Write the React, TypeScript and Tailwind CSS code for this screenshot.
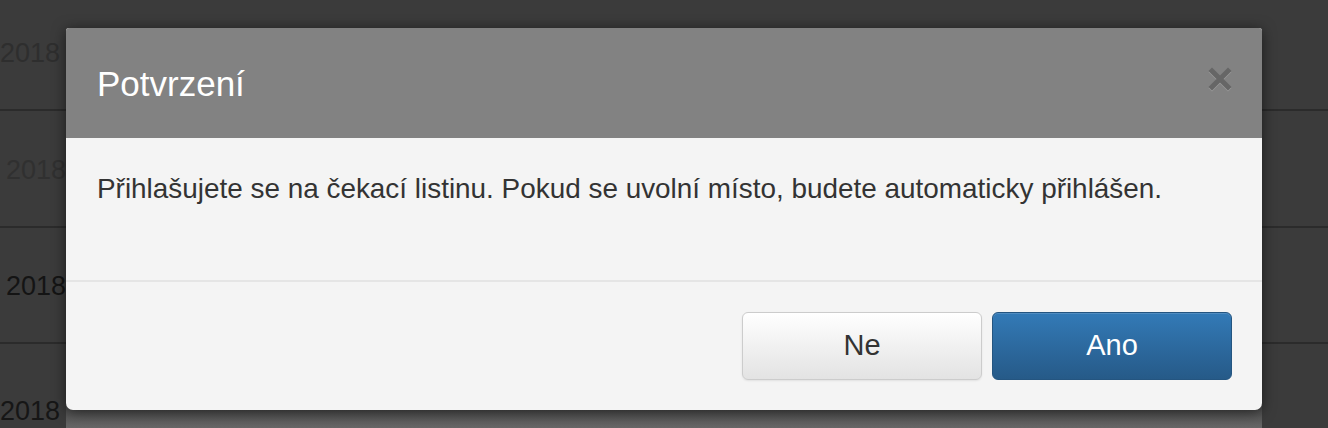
import React from 'react';

const rows = [
  { h: 'h-[111px]', pad: 'pt-[38px] pl-0', color: 'text-[#2e2e2e]' },
  { h: 'h-[117px]', pad: 'pt-[44px] pl-[6px]', color: 'text-[#303030]' },
  { h: 'h-[116px]', pad: 'pt-[43px] pl-[6px]', color: 'text-[#141414]' },
];

function CloseIcon() {
  return (
    <svg width="26" height="26" viewBox="0 0 26 26">
      <g strokeWidth="5" strokeLinecap="square">
        <path d="M5 6 L21 22 M21 6 L5 22" stroke="#9a9a9a" />
        <path d="M5 5 L21 21 M21 5 L5 21" stroke="#666666" />
      </g>
    </svg>
  );
}

export default function App() {
  return (
    <div
      className="relative h-[428px] w-[1328px] overflow-hidden bg-[#3b3b3b]"
      style={{ fontFamily: '"Liberation Sans", Arial, sans-serif' }}
    >
      {/* page behind the backdrop */}
      {rows.map((r, i) => (
        <div key={i} className={`${r.h} border-b-2 border-[#2b2b2b] ${r.pad}`}>
          <span className={`text-[27px] leading-[30px] ${r.color}`}>2018</span>
        </div>
      ))}
      <div className="flex h-[84px]">
        <div className="w-[66px] pt-[52px]">
          <span className="text-[27px] leading-[30px] text-[#161616]">2018</span>
        </div>
        <div className="w-[1196px] bg-gradient-to-b from-[#3b3b3b] via-[#3b3b3b] via-60% to-[#676767]" />
      </div>

      {/* modal */}
      <div className="absolute left-[66px] top-[28px] w-[1196px] overflow-hidden rounded-b-[7px] rounded-t-[3px] bg-[#f4f4f4] shadow-[0_2px_14px_rgba(0,0,0,0.55)]">
        <div className="flex h-[110px] items-center justify-between bg-[#828282] pl-[31px] pr-[28px]">
          <h4 className="text-[35px] leading-none text-white">Potvrzení</h4>
          <button className="mt-[-8px] flex h-[28px] w-[28px] items-center justify-center">
            <CloseIcon />
          </button>
        </div>
        <div className="h-[144px] border-b-2 border-[#e5e5e5] px-[31px] pt-[36px]">
          <p className="text-[27.9px] leading-[30px] text-[#333333]">
            Přihlašujete se na čekací listinu. Pokud se uvolní místo, budete automaticky přihlášen.
          </p>
        </div>
        <div className="flex h-[128px] items-start justify-end gap-[10px] pr-[30px] pt-[30px]">
          <button className="h-[68px] w-[240px] rounded-[6px] border border-[#cccccc] bg-gradient-to-b from-white to-[#e3e3e3] text-[29px] text-[#333333] shadow-[0_1px_2px_rgba(0,0,0,0.08)]">
            Ne
          </button>
          <button className="h-[68px] w-[240px] rounded-[6px] border border-[#245580] bg-gradient-to-b from-[#337ab7] to-[#265a88] text-[29px] text-white shadow-[inset_0_1px_0_rgba(255,255,255,0.15)]">
            Ano
          </button>
        </div>
      </div>
    </div>
  );
}
